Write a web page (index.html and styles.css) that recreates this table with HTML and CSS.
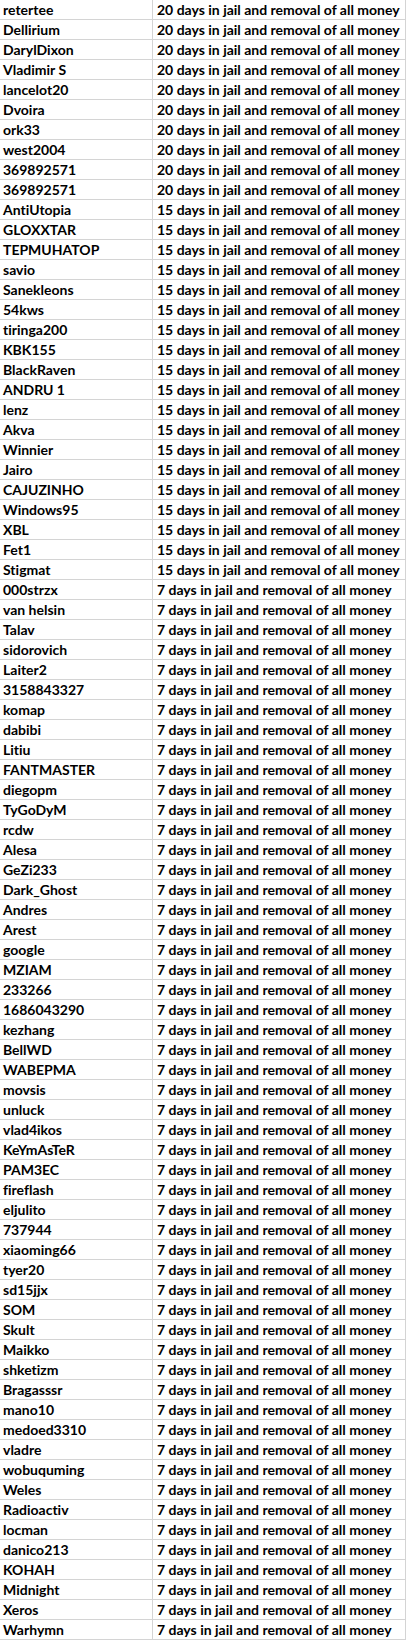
FILE: index.html
```html
<!DOCTYPE html>
<html>
<head>
<meta charset="utf-8">
<link rel="stylesheet" href="styles.css">
</head>
<body>
<div class="sheet">
<div class="name">retertee</div><div class="pen">20 days in jail and removal of all money</div>
<div class="name">Dellirium</div><div class="pen">20 days in jail and removal of all money</div>
<div class="name">DarylDixon</div><div class="pen">20 days in jail and removal of all money</div>
<div class="name">Vladimir S</div><div class="pen">20 days in jail and removal of all money</div>
<div class="name">lancelot20</div><div class="pen">20 days in jail and removal of all money</div>
<div class="name">Dvoira</div><div class="pen">20 days in jail and removal of all money</div>
<div class="name">ork33</div><div class="pen">20 days in jail and removal of all money</div>
<div class="name">west2004</div><div class="pen">20 days in jail and removal of all money</div>
<div class="name">369892571</div><div class="pen">20 days in jail and removal of all money</div>
<div class="name">369892571</div><div class="pen">20 days in jail and removal of all money</div>
<div class="name">AntiUtopia</div><div class="pen">15 days in jail and removal of all money</div>
<div class="name">GLOXXTAR</div><div class="pen">15 days in jail and removal of all money</div>
<div class="name">TEPMUHATOP</div><div class="pen">15 days in jail and removal of all money</div>
<div class="name">savio</div><div class="pen">15 days in jail and removal of all money</div>
<div class="name">Sanekleons</div><div class="pen">15 days in jail and removal of all money</div>
<div class="name">54kws</div><div class="pen">15 days in jail and removal of all money</div>
<div class="name">tiringa200</div><div class="pen">15 days in jail and removal of all money</div>
<div class="name">KBK155</div><div class="pen">15 days in jail and removal of all money</div>
<div class="name">BlackRaven</div><div class="pen">15 days in jail and removal of all money</div>
<div class="name">ANDRU 1</div><div class="pen">15 days in jail and removal of all money</div>
<div class="name">lenz</div><div class="pen">15 days in jail and removal of all money</div>
<div class="name">Akva</div><div class="pen">15 days in jail and removal of all money</div>
<div class="name">Winnier</div><div class="pen">15 days in jail and removal of all money</div>
<div class="name">Jairo</div><div class="pen">15 days in jail and removal of all money</div>
<div class="name">CAJUZINHO</div><div class="pen">15 days in jail and removal of all money</div>
<div class="name">Windows95</div><div class="pen">15 days in jail and removal of all money</div>
<div class="name">XBL</div><div class="pen">15 days in jail and removal of all money</div>
<div class="name">Fet1</div><div class="pen">15 days in jail and removal of all money</div>
<div class="name">Stigmat</div><div class="pen">15 days in jail and removal of all money</div>
<div class="name">000strzx</div><div class="pen">7 days in jail and removal of all money</div>
<div class="name">van helsin</div><div class="pen">7 days in jail and removal of all money</div>
<div class="name">Talav</div><div class="pen">7 days in jail and removal of all money</div>
<div class="name">sidorovich</div><div class="pen">7 days in jail and removal of all money</div>
<div class="name">Laiter2</div><div class="pen">7 days in jail and removal of all money</div>
<div class="name">3158843327</div><div class="pen">7 days in jail and removal of all money</div>
<div class="name">komap</div><div class="pen">7 days in jail and removal of all money</div>
<div class="name">dabibi</div><div class="pen">7 days in jail and removal of all money</div>
<div class="name">Litiu</div><div class="pen">7 days in jail and removal of all money</div>
<div class="name">FANTMASTER</div><div class="pen">7 days in jail and removal of all money</div>
<div class="name">diegopm</div><div class="pen">7 days in jail and removal of all money</div>
<div class="name">TyGoDyM</div><div class="pen">7 days in jail and removal of all money</div>
<div class="name">rcdw</div><div class="pen">7 days in jail and removal of all money</div>
<div class="name">Alesa</div><div class="pen">7 days in jail and removal of all money</div>
<div class="name">GeZi233</div><div class="pen">7 days in jail and removal of all money</div>
<div class="name">Dark_Ghost</div><div class="pen">7 days in jail and removal of all money</div>
<div class="name">Andres</div><div class="pen">7 days in jail and removal of all money</div>
<div class="name">Arest</div><div class="pen">7 days in jail and removal of all money</div>
<div class="name">google</div><div class="pen">7 days in jail and removal of all money</div>
<div class="name">MZIAM</div><div class="pen">7 days in jail and removal of all money</div>
<div class="name">233266</div><div class="pen">7 days in jail and removal of all money</div>
<div class="name">1686043290</div><div class="pen">7 days in jail and removal of all money</div>
<div class="name">kezhang</div><div class="pen">7 days in jail and removal of all money</div>
<div class="name">BellWD</div><div class="pen">7 days in jail and removal of all money</div>
<div class="name">WABEPMA</div><div class="pen">7 days in jail and removal of all money</div>
<div class="name">movsis</div><div class="pen">7 days in jail and removal of all money</div>
<div class="name">unluck</div><div class="pen">7 days in jail and removal of all money</div>
<div class="name">vlad4ikos</div><div class="pen">7 days in jail and removal of all money</div>
<div class="name">KeYmAsTeR</div><div class="pen">7 days in jail and removal of all money</div>
<div class="name">PAM3EC</div><div class="pen">7 days in jail and removal of all money</div>
<div class="name">fireflash</div><div class="pen">7 days in jail and removal of all money</div>
<div class="name">eljulito</div><div class="pen">7 days in jail and removal of all money</div>
<div class="name">737944</div><div class="pen">7 days in jail and removal of all money</div>
<div class="name">xiaoming66</div><div class="pen">7 days in jail and removal of all money</div>
<div class="name">tyer20</div><div class="pen">7 days in jail and removal of all money</div>
<div class="name">sd15jjx</div><div class="pen">7 days in jail and removal of all money</div>
<div class="name">SOM</div><div class="pen">7 days in jail and removal of all money</div>
<div class="name">Skult</div><div class="pen">7 days in jail and removal of all money</div>
<div class="name">Maikko</div><div class="pen">7 days in jail and removal of all money</div>
<div class="name">shketizm</div><div class="pen">7 days in jail and removal of all money</div>
<div class="name">Bragasssr</div><div class="pen">7 days in jail and removal of all money</div>
<div class="name">mano10</div><div class="pen">7 days in jail and removal of all money</div>
<div class="name">medoed3310</div><div class="pen">7 days in jail and removal of all money</div>
<div class="name">vladre</div><div class="pen">7 days in jail and removal of all money</div>
<div class="name">wobuquming</div><div class="pen">7 days in jail and removal of all money</div>
<div class="name">Weles</div><div class="pen">7 days in jail and removal of all money</div>
<div class="name">Radioactiv</div><div class="pen">7 days in jail and removal of all money</div>
<div class="name">locman</div><div class="pen">7 days in jail and removal of all money</div>
<div class="name">danico213</div><div class="pen">7 days in jail and removal of all money</div>
<div class="name">KOHAH</div><div class="pen">7 days in jail and removal of all money</div>
<div class="name">Midnight</div><div class="pen">7 days in jail and removal of all money</div>
<div class="name">Xeros</div><div class="pen">7 days in jail and removal of all money</div>
<div class="name">Warhymn</div><div class="pen">7 days in jail and removal of all money</div>
</div>
</body>
</html>
```
FILE: styles.css
```css
html, body {
  margin: 0;
  padding: 0;
  background: #ffffff;
}
.sheet {
  display: grid;
  grid-template-columns: 153px 253px;
  grid-auto-rows: 20px;
  font-family: Lato, "Liberation Sans", sans-serif;
  font-weight: bold;
  font-size: 14px;
  font-variant-ligatures: none;
  font-feature-settings: "liga" 0, "clig" 0, "dlig" 0;
  color: #000000;
}
.name, .pen {
  box-sizing: border-box;
  border-right: 1px solid #d4d4d4;
  border-bottom: 1px solid #d4d4d4;
  white-space: nowrap;
  overflow: hidden;
  line-height: 18px;
  padding-top: 1px;
}
.name {
  padding-left: 3px;
}
.pen {
  padding-left: 4px;
}
```
